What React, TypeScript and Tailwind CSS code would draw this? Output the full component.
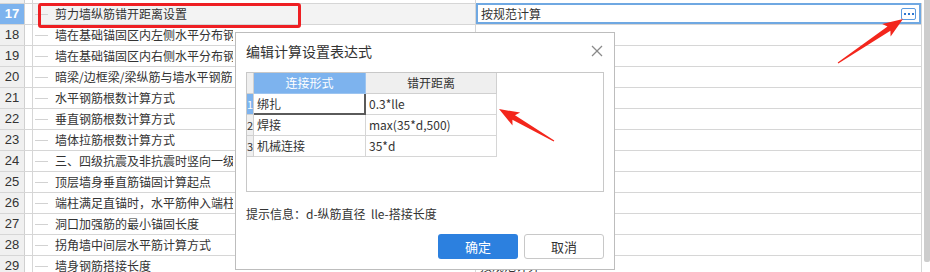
import React from "react";

const CJK = { fontFamily: '"Microsoft YaHei","Noto Sans CJK SC","Noto Sans",sans-serif' };

const rows: [string, string, string][] = [
  ["17", "剪力墙纵筋错开距离设置", "按规范计算"],
  ["18", "墙在基础锚固区内左侧水平分布钢筋长度", ""],
  ["19", "墙在基础锚固区内右侧水平分布钢筋长度", ""],
  ["20", "暗梁/边框梁/梁纵筋与墙水平钢筋的关系", ""],
  ["21", "水平钢筋根数计算方式", ""],
  ["22", "垂直钢筋根数计算方式", ""],
  ["23", "墙体拉筋根数计算方式", ""],
  ["24", "三、四级抗震及非抗震时竖向一级钢筋搭接长度", ""],
  ["25", "顶层墙身垂直筋锚固计算起点", ""],
  ["26", "端柱满足直锚时，水平筋伸入端柱长度", ""],
  ["27", "洞口加强筋的最小锚固长度", ""],
  ["28", "拐角墙中间层水平筋计算方式", ""],
  ["29", "墙身钢筋搭接长度", "按规范计算"],
];

function arrowPoints(tx: number, ty: number, px: number, py: number) {
  const dx = px - tx;
  const dy = py - ty;
  const len = Math.hypot(dx, dy);
  const ux = dx / len;
  const uy = dy / len;
  const nx = -uy;
  const ny = ux;
  const h = 17;
  const Nx = px - ux * h;
  const Ny = py - uy * h;
  const Bx = px - ux * (h + 3);
  const By = py - uy * (h + 3);
  const pts: [number, number][] = [
    [tx + nx * 0.6, ty + ny * 0.6],
    [Nx + nx * 2.6, Ny + ny * 2.6],
    [Bx + nx * 7.5, By + ny * 7.5],
    [px, py],
    [Bx - nx * 7.5, By - ny * 7.5],
    [Nx - nx * 2.6, Ny - ny * 2.6],
    [tx - nx * 0.6, ty - ny * 0.6],
  ];
  return pts.map((p) => `${p[0].toFixed(1)},${p[1].toFixed(1)}`).join(" ");
}

function GridRow({ n, name, value, sel }: { n: string; name: string; value: string; sel: boolean }) {
  return (
    <div className="flex h-[21px] border-b border-[#d6d6d6]">
      <div
        className={
          sel
            ? "w-[25px] shrink-0 border-r border-[#d0d0d0] bg-[#7db3ee] text-white font-bold flex items-center justify-center text-[13px]"
            : "w-[25px] shrink-0 border-r border-[#d0d0d0] bg-[#f0f0f0] text-[#333] flex items-center justify-center text-[13px]"
        }
        style={{ fontFamily: '"Liberation Sans",Arial,sans-serif' }}
      >
        {n}
      </div>
      <div className="w-[8px] shrink-0 border-r border-[#d6d6d6]" />
      <div
        className={
          sel
            ? "w-[443px] shrink-0 border-r border-[#d6d6d6] bg-[#f3f3f3] flex items-center overflow-hidden"
            : "w-[443px] shrink-0 border-r border-[#d6d6d6] flex items-center overflow-hidden"
        }
      >
        <div className="ml-[2px] w-[13px] h-px bg-[#d2d2d2] shrink-0" />
        <span
          className={
            sel
              ? "ml-[7px] text-[12px] text-[#333] whitespace-nowrap"
              : "ml-[7px] max-w-[178px] overflow-hidden text-[12px] text-[#333] whitespace-nowrap"
          }
          style={CJK}
        >
          {name}
        </span>
      </div>
      <div className="w-[446px] shrink-0 border-r border-[#d6d6d6] relative">
        {sel ? (
          <div className="absolute left-0 right-0 top-[-1px] h-[21px] border-2 border-[#6fa8e2] bg-white flex items-center justify-between pl-[3px] pr-[3px]">
            <span className="text-[12px] text-[#333]" style={CJK}>
              {value}
            </span>
            <div className="w-[15px] h-[12px] border border-[#5b9be0] rounded-[2px] flex items-center justify-center gap-[2px]">
              <div className="w-[2px] h-[2px] bg-[#2f77d0]" />
              <div className="w-[2px] h-[2px] bg-[#2f77d0]" />
              <div className="w-[2px] h-[2px] bg-[#2f77d0]" />
            </div>
          </div>
        ) : (
          <div className="h-full flex items-center pl-[4px]">
            <span className="text-[12px] text-[#333]" style={CJK}>
              {value}
            </span>
          </div>
        )}
      </div>
    </div>
  );
}

export default function App() {
  return (
    <div className="relative w-[930px] h-[272px] overflow-hidden bg-white" style={CJK}>
      <div className="flex">
        <div className="flex flex-col w-[922px]">
          <div className="h-[4px] border-b border-[#d6d6d6] flex">
            <div className="w-[25px] bg-[#f0f0f0] border-r border-[#d0d0d0]" />
            <div className="w-[8px] border-r border-[#d6d6d6]" />
            <div className="w-[443px] border-r border-[#d6d6d6]" />
          </div>
          {rows.map((r, i) => (
            <GridRow key={r[0]} n={r[0]} name={r[1]} value={r[2]} sel={i === 0} />
          ))}
        </div>
        <div className="ml-[2px] w-[6px] h-[262px] bg-[#cdcdcd] rounded-b-[2px]" />
      </div>

      {/* red highlight box */}
      <div className="absolute left-[38px] top-[3px] w-[263px] h-[25px] border-[3px] border-[#ee1f23] rounded-[3px]" />

      {/* dialog */}
      <div className="absolute left-[235px] top-[32px] w-[380px] h-[238px] border border-[#bdbdbd] bg-white flex flex-col px-[10px]">
        <div className="h-[36px] flex items-center justify-between">
          <span className="text-[14px] text-[#333]">编辑计算设置表达式</span>
          <svg width="12" height="12" viewBox="0 0 12 12" className="mr-[1px]">
            <line x1="1" y1="1" x2="11" y2="11" stroke="#8a8a8a" strokeWidth="1.2" />
            <line x1="11" y1="1" x2="1" y2="11" stroke="#8a8a8a" strokeWidth="1.2" />
          </svg>
        </div>
        <div className="mt-[3px] w-[358px] h-[120px] border border-[#c8c8c8] bg-white">
          <div className="flex h-[21px]">
            <div className="w-[7px] bg-[#efefef] border-r border-b border-[#d0d0d0]" />
            <div className="w-[112px] bg-[#7db3ee] text-white text-[12px] flex items-center justify-center border-r border-b border-[#9cc4f0]">
              连接形式
            </div>
            <div className="w-[131px] bg-[#efefef] text-[#333] text-[12px] flex items-center justify-center border-r border-b border-[#d0d0d0]">
              错开距离
            </div>
          </div>
          {[
            ["1", "绑扎", "0.3*lle"],
            ["2", "焊接", "max(35*d,500)"],
            ["3", "机械连接", "35*d"],
          ].map((r, i) => (
            <div key={r[0]} className="flex h-[21px]">
              <div
                className={
                  i === 0
                    ? "w-[7px] bg-[#7db3ee] text-white text-[11px] flex items-center justify-center border-r border-b border-[#d0d0d0] overflow-hidden"
                    : "w-[7px] bg-[#efefef] text-[#333] text-[11px] flex items-center justify-center border-r border-b border-[#d0d0d0] overflow-hidden"
                }
              >
                {r[0]}
              </div>
              <div
                className={
                  i === 0
                    ? "w-[112px] text-[12px] text-[#333] flex items-center pl-[3px] border-r-2 border-b-2 border-[#5a5a5a]"
                    : "w-[112px] text-[12px] text-[#333] flex items-center pl-[3px] border-r border-b border-[#d6d6d6]"
                }
              >
                {r[1]}
              </div>
              <div className="w-[131px] text-[12px] text-[#333] flex items-center pl-[3px] border-r border-b border-[#d6d6d6]">
                {r[2]}
              </div>
            </div>
          ))}
        </div>
        <div className="mt-[14px] h-[16px] flex items-center text-[12px] text-[#333] whitespace-pre">
          提示信息：d-纵筋直径  lle-搭接长度
        </div>
        <div className="mt-[12px] flex justify-end gap-[6px]">
          <div className="w-[80px] h-[25px] rounded-[3px] bg-[#2c80df] text-white text-[13px] flex items-center justify-center">
            确定
          </div>
          <div className="w-[80px] h-[25px] rounded-[3px] border border-[#c8c8c8] bg-white text-[#333] text-[13px] flex items-center justify-center">
            取消
          </div>
        </div>
      </div>

      {/* arrows */}
      <svg className="absolute left-0 top-0 pointer-events-none" width="930" height="272">
        <polygon points={arrowPoints(838, 63, 903, 19)} fill="#f3261c" />
        <polygon points={arrowPoints(554, 141, 499, 109)} fill="#f3261c" />
      </svg>
    </div>
  );
}
